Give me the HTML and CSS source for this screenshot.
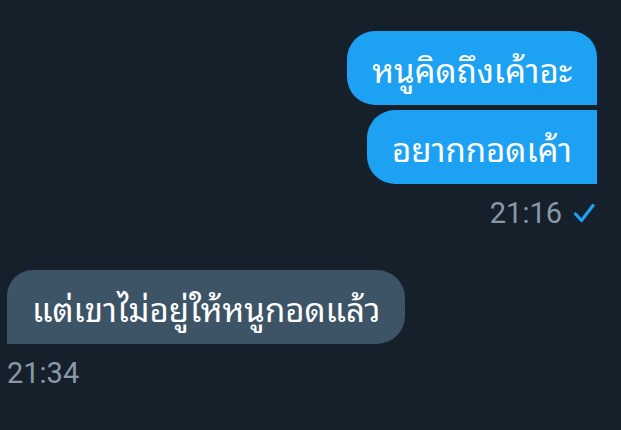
FILE: index.html
```html
<!DOCTYPE html>
<html lang="th">
<head>
<meta charset="utf-8">
<link rel="stylesheet" href="styles.css">
</head>
<body>
<div class="chat">
  <div class="group sent">
    <div class="bubble out first">หนูคิดถึงเค้าอะ</div>
    <div class="bubble out last">อยากกอดเค้า</div>
    <div class="meta meta-out">
      <span class="time">21:16</span>
      <svg class="check" width="22" height="22" viewBox="0 0 22 22"><path d="M2.5 12 L8.5 18.5 L20 3.5" fill="none" stroke="#1da1f2" stroke-width="3.2" stroke-linecap="round" stroke-linejoin="round"/></svg>
    </div>
  </div>
  <div class="group received">
    <div class="bubble in">แต่เขาไม่อยู่ให้หนูกอดแล้ว</div>
    <div class="meta meta-in"><span class="time">21:34</span></div>
  </div>
</div>
</body>
</html>
```
FILE: styles.css
```css
html, body {
  margin: 0;
  padding: 0;
  background: #15202b;
  height: 100%;
  overflow: hidden;
}
.chat {
  font-family: Roboto, "Noto Sans Thai Looped", "Noto Sans Thai", sans-serif;
  display: flex;
  flex-direction: column;
  padding: 31px 24px 0 7px;
}
.group {
  display: flex;
  flex-direction: column;
}
.sent {
  align-items: flex-end;
  gap: 5px;
}
.received {
  align-items: flex-start;
  margin-top: 37px;
}
.bubble {
  box-sizing: border-box;
  height: 74px;
  display: flex;
  align-items: center;
  padding: 0 25px;
  font-size: 33px;
  color: #ffffff;
  white-space: nowrap;
}
.out {
  background: #1da1f2;
}
.out.first {
  border-radius: 28px 26px 0 28px;
}
.out.last {
  border-radius: 28px 0 0 28px;
}
.in {
  background: #3d5466;
  border-radius: 26px 28px 28px 0;
}
.meta {
  display: flex;
  align-items: center;
  height: 40px;
  color: #8899a6;
  font-size: 29px;
}
.meta-out {
  margin-top: 4px;
  gap: 11px;
}
.meta-in {
  margin-top: 9px;
}
.check {
  display: block;
  margin-right: 2px;
}
```
